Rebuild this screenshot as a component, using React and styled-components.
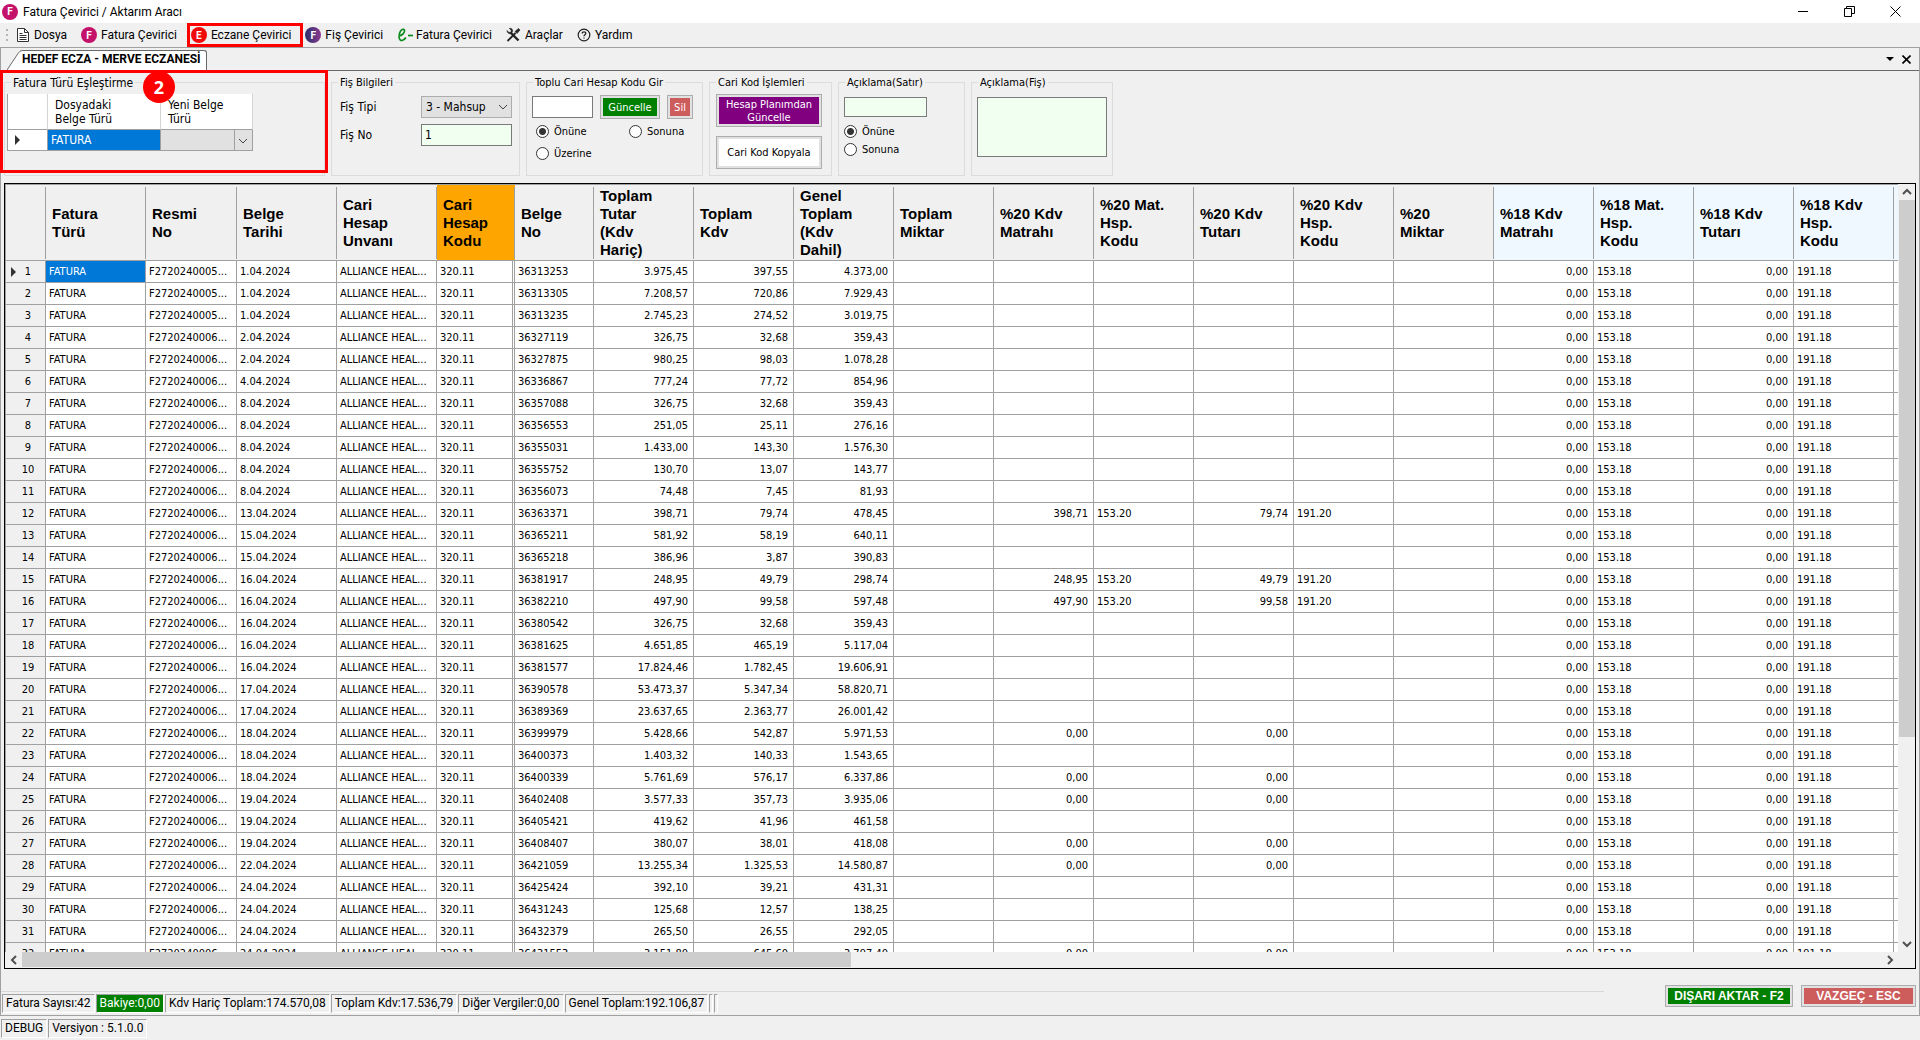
import styled, { createGlobalStyle, css } from "styled-components";

const COLUMNS = [
  { key: "tur", title: "Fatura\nTürü", width: 100 },
  { key: "resmi", title: "Resmi\nNo", width: 91 },
  { key: "tarih", title: "Belge\nTarihi", width: 100 },
  { key: "unvan", title: "Cari\nHesap\nUnvanı", width: 100 },
  { key: "kod", title: "Cari\nHesap\nKodu", width: 78, color: "#ffa500", frozen: true },
  { key: "belge", title: "Belge\nNo", width: 79 },
  { key: "tutar", title: "Toplam\nTutar\n(Kdv\nHariç)", width: 100, num: true },
  { key: "kdv", title: "Toplam\nKdv", width: 100, num: true },
  { key: "genel", title: "Genel\nToplam\n(Kdv\nDahil)", width: 100, num: true },
  { key: "miktar", title: "Toplam\nMiktar", width: 100, num: true },
  { key: "m20", title: "%20 Kdv\nMatrahı", width: 100, num: true },
  { key: "mk20", title: "%20 Mat.\nHsp.\nKodu", width: 100 },
  { key: "t20", title: "%20 Kdv\nTutarı", width: 100, num: true },
  { key: "tk20", title: "%20 Kdv\nHsp.\nKodu", width: 100 },
  { key: "miktar20", title: "%20\nMiktar", width: 100, num: true },
  { key: "m18", title: "%18 Kdv\nMatrahı", width: 100, num: true, color: "#f0f8ff" },
  { key: "mk18", title: "%18 Mat.\nHsp.\nKodu", width: 100, color: "#f0f8ff" },
  { key: "t18", title: "%18 Kdv\nTutarı", width: 100, num: true, color: "#f0f8ff" },
  { key: "tk18", title: "%18 Kdv\nHsp.\nKodu", width: 100, color: "#f0f8ff" },
];

// tarih, belge no, tutar, kdv, genel toplam, %20 matrah, %20 tutar
const INVOICES = [
  ["1.04.2024", "36313253", "3.975,45", "397,55", "4.373,00"],
  ["1.04.2024", "36313305", "7.208,57", "720,86", "7.929,43"],
  ["1.04.2024", "36313235", "2.745,23", "274,52", "3.019,75"],
  ["2.04.2024", "36327119", "326,75", "32,68", "359,43"],
  ["2.04.2024", "36327875", "980,25", "98,03", "1.078,28"],
  ["4.04.2024", "36336867", "777,24", "77,72", "854,96"],
  ["8.04.2024", "36357088", "326,75", "32,68", "359,43"],
  ["8.04.2024", "36356553", "251,05", "25,11", "276,16"],
  ["8.04.2024", "36355031", "1.433,00", "143,30", "1.576,30"],
  ["8.04.2024", "36355752", "130,70", "13,07", "143,77"],
  ["8.04.2024", "36356073", "74,48", "7,45", "81,93"],
  ["13.04.2024", "36363371", "398,71", "79,74", "478,45", "398,71", "79,74"],
  ["15.04.2024", "36365211", "581,92", "58,19", "640,11"],
  ["15.04.2024", "36365218", "386,96", "3,87", "390,83"],
  ["16.04.2024", "36381917", "248,95", "49,79", "298,74", "248,95", "49,79"],
  ["16.04.2024", "36382210", "497,90", "99,58", "597,48", "497,90", "99,58"],
  ["16.04.2024", "36380542", "326,75", "32,68", "359,43"],
  ["16.04.2024", "36381625", "4.651,85", "465,19", "5.117,04"],
  ["16.04.2024", "36381577", "17.824,46", "1.782,45", "19.606,91"],
  ["17.04.2024", "36390578", "53.473,37", "5.347,34", "58.820,71"],
  ["17.04.2024", "36389369", "23.637,65", "2.363,77", "26.001,42"],
  ["18.04.2024", "36399979", "5.428,66", "542,87", "5.971,53", "0,00", "0,00"],
  ["18.04.2024", "36400373", "1.403,32", "140,33", "1.543,65"],
  ["18.04.2024", "36400339", "5.761,69", "576,17", "6.337,86", "0,00", "0,00"],
  ["19.04.2024", "36402408", "3.577,33", "357,73", "3.935,06", "0,00", "0,00"],
  ["19.04.2024", "36405421", "419,62", "41,96", "461,58"],
  ["19.04.2024", "36408407", "380,07", "38,01", "418,08", "0,00", "0,00"],
  ["22.04.2024", "36421059", "13.255,34", "1.325,53", "14.580,87", "0,00", "0,00"],
  ["24.04.2024", "36425424", "392,10", "39,21", "431,31"],
  ["24.04.2024", "36431243", "125,68", "12,57", "138,25"],
  ["24.04.2024", "36432379", "265,50", "26,55", "292,05"],
  ["24.04.2024", "36431553", "3.151,80", "645,60", "3.797,40", "0,00", "0,00"],
];

const ROWS = INVOICES.map(([tarih, belge, tutar, kdv, genel, m20, t20], i) => {
  const hasCodes = m20 && m20 !== "0,00";
  return {
    tur: "FATURA",
    resmi: i < 3 ? "F2720240005..." : "F2720240006...",
    tarih,
    unvan: "ALLIANCE HEAL...",
    kod: "320.11",
    belge,
    tutar,
    kdv,
    genel,
    m20,
    mk20: hasCodes ? "153.20" : "",
    t20,
    tk20: hasCodes ? "191.20" : "",
    m18: "0,00",
    mk18: "153.18",
    t18: "0,00",
    tk18: "191.18",
  };
});

const TOTALS = [
  { label: "Fatura Sayısı:42" },
  { label: "Bakiye:0,00", green: true },
  { label: "Kdv Hariç Toplam:174.570,08" },
  { label: "Toplam Kdv:17.536,79" },
  { label: "Diğer Vergiler:0,00" },
  { label: "Genel Toplam:192.106,87" },
];

const Disc = ({ letter, from, to }) => (
  <Round $from={from} $to={to || from}>
    {letter}
  </Round>
);

const DocIcon = () => (
  <svg width="14" height="16" viewBox="0 0 14 16" fill="none" stroke="#333">
    <path d="M1.5 1.5h7l4 4v9h-11z" fill="#fff" />
    <path d="M8.5 1.5v4h4M3.5 6.5h3M3.5 8.5h7M3.5 10.5h7M3.5 12.5h7" />
  </svg>
);

const EIcon = () => (
  <svg width="17" height="16" viewBox="0 0 17 16" fill="none" stroke="#0a8a1a" strokeWidth="1.7">
    <path d="M1.5 9C5 8.500 8 6 7.500 3.500C7 1 3.500 2.500 2.500 6.500C1.500 11 2.500 13.800 5 13.500C6.800 13.200 8 12 8.800 10.500" />
    <path d="M11 8.500h5" />
  </svg>
);

const ToolsIcon = () => (
  <svg width="15" height="16" viewBox="0 0 15 16" fill="none" stroke="#222">
    <path d="M4.500 5.500L12.500 13.500" strokeWidth="2.400" />
    <path d="M1 3.500L3 5.500L5 5.200L5.200 3.200L3.300 1.400C5.500 .8 7 2.500 6.600 4.600L5 6.600C3 7.200 1 5.800 1 3.500z" fill="#222" strokeWidth=".6" />
    <path d="M1.500 14L9.500 6" strokeWidth="1.800" />
    <path d="M9 4.500L12.500 1.500L14 3L11 6.500z" fill="#222" strokeWidth=".6" />
  </svg>
);

const HelpIcon = () => (
  <svg width="14" height="14" viewBox="0 0 14 14" fill="none" stroke="#222">
    <circle cx="7" cy="7" r="5.800" strokeWidth="1.200" />
    <path d="M5.200 5.600C5.200 3.300 8.900 3.400 8.800 5.500C8.700 6.700 7 6.800 7 8.300M7 9.400v1.200" strokeWidth="1.300" />
  </svg>
);

const Chevron = ({ dir = "down", bold }) => {
  const turn = { down: 0, left: 90, up: 180, right: 270 }[dir];
  return (
    <svg width="10" height="10" viewBox="0 0 10 10" fill="none" stroke={bold ? "#505050" : "#444"} strokeWidth={bold ? 2 : 1}>
      <path d="M1 3L5 7L9 3" transform={`rotate(${turn} 5 5)`} />
    </svg>
  );
};

const RowArrow = () => (
  <svg width="6" height="10" viewBox="0 0 6 10" fill="#333">
    <path d="M0 0L5 5L0 10z" />
  </svg>
);

const MENU = [
  { label: "Dosya", icon: <DocIcon /> },
  { label: "Fatura Çevirici", icon: <Disc letter="F" from="#c4126a" /> },
  { label: "Eczane Çevirici", icon: <Disc letter="E" from="#f00a0a" />, marked: true },
  { label: "Fiş Çevirici", icon: <Disc letter="F" from="#2c2f6b" to="#8a3a8e" /> },
  { label: "Fatura Çevirici", icon: <EIcon />, tight: true },
  { label: "Araçlar", icon: <ToolsIcon /> },
  { label: "Yardım", icon: <HelpIcon /> },
];

const InvoiceGrid = () => (
  <GridFrame>
    <GridBody>
      <GridTable>
        <colgroup>
          <Col $width={40} />
          {COLUMNS.map(({ key, width }) => (
            <Col key={key} $width={width} />
          ))}
          <col />
        </colgroup>
        <thead>
          <tr>
            <HeadCell>
              <HeadText />
            </HeadCell>
            {COLUMNS.map(({ key, title, color }) => (
              <HeadCell key={key} $color={color} scope="col">
                <HeadText>{title}</HeadText>
              </HeadCell>
            ))}
            <HeadCell $color="#f0f8ff" />
          </tr>
        </thead>
        <tbody>
          {ROWS.map((row, i) => (
            <tr key={row.belge}>
              <RowHead scope="row">
                <RowNumber>
                  <ArrowSlot>{i === 0 && <RowArrow />}</ArrowSlot>
                  {i + 1}
                </RowNumber>
              </RowHead>
              {COLUMNS.map(({ key, num, frozen }) => (
                <Cell key={key} $num={num} $frozen={frozen} $selected={i === 0 && key === "tur"}>
                  {row[key]}
                </Cell>
              ))}
              <Cell $last />
            </tr>
          ))}
        </tbody>
      </GridTable>
    </GridBody>
    <VerticalBar>
      <BarButton aria-label="Yukarı">
        <Chevron dir="up" bold />
      </BarButton>
      <VerticalTrack>
        <VerticalThumb />
      </VerticalTrack>
      <BarButton aria-label="Aşağı">
        <Chevron bold />
      </BarButton>
    </VerticalBar>
    <HorizontalBar>
      <BarButton aria-label="Sola">
        <Chevron dir="left" bold />
      </BarButton>
      <HorizontalTrack>
        <HorizontalThumb />
      </HorizontalTrack>
      <BarButton aria-label="Sağa">
        <Chevron dir="right" bold />
      </BarButton>
    </HorizontalBar>
  </GridFrame>
);

const App = () => {
  return (
    <Window>
      <GlobalStyle />
      <TitleBar>
        <Disc letter="F" from="#c4126a" />
        <Title>Fatura Çevirici / Aktarım Aracı</Title>
        <WindowButtons>
          <WindowButton aria-label="Simge durumuna küçült">
            <svg width="11" height="11" stroke="#000">
              <path d="M0 5.500h10" />
            </svg>
          </WindowButton>
          <WindowButton aria-label="Geri yükle">
            <svg width="11" height="11" fill="none" stroke="#000">
              <path d="M.5 2.500h7v8h-7zM2.500 2.500v-2h8v7h-3" />
            </svg>
          </WindowButton>
          <WindowButton aria-label="Kapat">
            <svg width="11" height="11" stroke="#000">
              <path d="M.5 .5l10 10M10.500 .5l-10 10" />
            </svg>
          </WindowButton>
        </WindowButtons>
      </TitleBar>

      <Toolbar>
        <Grip />
        {MENU.map(({ label, icon, marked, tight }, i) => (
          <MenuButton key={i} $marked={marked} $tight={tight}>
            {icon}
            {label}
          </MenuButton>
        ))}
      </Toolbar>

      <Panel>
        <TabStrip>
          <Tab>
            <svg width="15" height="20" viewBox="0 0 15 20">
              <path d="M0 20L11 3.500Q13 .5 15 .5V20z" fill="#fff" />
              <path d="M0 20L11 3.500Q13 .5 15 .5" fill="none" stroke="#696969" />
            </svg>
            <TabText>HEDEF ECZA - MERVE ECZANESİ</TabText>
          </Tab>
          <TabTools>
            <ToolButton aria-label="Sekmeler">
              <svg width="8" height="4">
                <path d="M0 0h8L4 4z" />
              </svg>
            </ToolButton>
            <ToolButton aria-label="Sekmeyi kapat">
              <svg width="9" height="9" stroke="#000" strokeWidth="1.600">
                <path d="M.5 .5l8 8M8.500 .5l-8 8" />
              </svg>
            </ToolButton>
          </TabTools>
        </TabStrip>

        <Groups>
          <Group $width={321}>
            <Legend $big>Fatura Türü Eşleştirme</Legend>
            <MatchTable>
              <thead>
                <tr>
                  <MatchHead $width={40} />
                  <MatchHead $width={113}>{"Dosyadaki\nBelge Türü"}</MatchHead>
                  <MatchHead $width={92}>{"Yeni Belge\nTürü"}</MatchHead>
                </tr>
              </thead>
              <tbody>
                <tr>
                  <MatchCell>
                    <RowArrow />
                  </MatchCell>
                  <MatchCell $selected>FATURA</MatchCell>
                  <MatchCell $flush>
                    <SelectBox $cell>
                      <select aria-label="Yeni Belge Türü" />
                      <Chevron />
                    </SelectBox>
                  </MatchCell>
                </tr>
              </tbody>
            </MatchTable>
          </Group>

          <Group $width={189}>
            <Legend>Fiş Bilgileri</Legend>
            <SlipForm>
              <label htmlFor="fis-tipi">Fiş Tipi</label>
              <SelectBox>
                <select id="fis-tipi">
                  <option>3 - Mahsup</option>
                </select>
                <Chevron />
              </SelectBox>
              <label htmlFor="fis-no">Fiş No</label>
              <TextInput id="fis-no" defaultValue="1" $mint $height={22} />
            </SlipForm>
          </Group>

          <Group $width={177}>
            <Legend>Toplu Cari Hesap Kodu Gir</Legend>
            <GroupBody>
              <CodeRow>
                <TextInput aria-label="Cari hesap kodu" $height={22} />
                <PushButton $color="#008000" $height={24}>Güncelle</PushButton>
                <PushButton $color="#cd5c5c" $height={24}>Sil</PushButton>
              </CodeRow>
              <RadioGrid>
                <Radio>
                  <input type="radio" name="kod" defaultChecked />
                  Önüne
                </Radio>
                <Radio>
                  <input type="radio" name="kod" />
                  Sonuna
                </Radio>
                <Radio>
                  <input type="radio" name="kod" />
                  Üzerine
                </Radio>
              </RadioGrid>
            </GroupBody>
          </Group>

          <Group $width={123}>
            <Legend>Cari Kod İşlemleri</Legend>
            <ButtonStack>
              <PushButton $color="#800080" $height={33}>{"Hesap Planımdan\nGüncelle"}</PushButton>
              <PushButton $color="#fff" $height={33}>Cari Kod Kopyala</PushButton>
            </ButtonStack>
          </Group>

          <Group $width={127}>
            <Legend>Açıklama(Satır)</Legend>
            <GroupBody>
              <LineInput aria-label="Açıklama(Satır)" $mint $height={20} />
              <RadioStack>
                <Radio>
                  <input type="radio" name="satir" defaultChecked />
                  Önüne
                </Radio>
                <Radio>
                  <input type="radio" name="satir" />
                  Sonuna
                </Radio>
              </RadioStack>
            </GroupBody>
          </Group>

          <Group $width={142}>
            <Legend>Açıklama(Fiş)</Legend>
            <GroupBody>
              <NoteArea aria-label="Açıklama(Fiş)" />
            </GroupBody>
          </Group>

          <Highlight />
          <StepBadge>2</StepBadge>
        </Groups>

        <InvoiceGrid />

        <Footer>
          <Totals>
            {TOTALS.map(({ label, green }) => (
              <StatusItem key={label} $green={green}>
                {label}
              </StatusItem>
            ))}
            <StatusItem $empty />
            <StatusItem $empty />
          </Totals>
          <Actions>
            <ActionButton $color="#008000" $height={22} $width={128}>DIŞARI AKTAR - F2</ActionButton>
            <ActionButton $color="#cd5c5c" $height={22} $width={115}>VAZGEÇ - ESC</ActionButton>
          </Actions>
        </Footer>
      </Panel>

      <StatusBar>
        <StatusItem>DEBUG</StatusItem>
        <StatusItem>Versiyon : 5.1.0.0</StatusItem>
      </StatusBar>
    </Window>
  );
};

export default App;

const segoe = `Roboto, "Noto Sans", sans-serif`;
const tahoma = `"DejaVu Sans Condensed", "Noto Sans", sans-serif`;
const line = "#a0a0a0";

const GlobalStyle = createGlobalStyle`
  * {
    box-sizing: border-box;
  }
  body {
    margin: 0;
    background: #f0f0f0;
    color: #000;
    font-family: ${tahoma};
    font-size: 11px;
  }
  button, input, select, textarea {
    font: inherit;
    color: inherit;
    margin: 0;
    padding: 0;
    border: 0;
    border-radius: 0;
    background: none;
  }
  svg {
    display: block;
    flex: none;
  }
`;

const Window = styled.div`
  display: flex;
  flex-direction: column;
  height: 100vh;
`;

const TitleBar = styled.header`
  display: flex;
  align-items: center;
  height: 23px;
  padding-left: 2px;
  gap: 5px;
  background: #fff;
`;

const Title = styled.h1`
  flex: 1;
  margin: 0;
  font: 400 12px ${segoe};
`;

const WindowButtons = styled.div`
  display: flex;
  gap: 35px;
  padding-right: 19px;
`;

const WindowButton = styled.button`
  display: flex;
`;

const Round = styled.span`
  display: flex;
  align-items: center;
  justify-content: center;
  flex: none;
  width: 16px;
  height: 16px;
  border-radius: 50%;
  background: linear-gradient(90deg, ${({ $from }) => $from}, ${({ $to }) => $to});
  color: #fff;
  font: 700 10px Roboto, sans-serif;
`;

const Toolbar = styled.nav`
  display: flex;
  align-items: center;
  gap: 14px;
  height: 24px;
`;

const Grip = styled.span`
  width: 2px;
  height: 12px;
  margin: 0 -6px 0 6px;
  background: repeating-linear-gradient(#b4b4b4 0 2px, transparent 2px 5px);
`;

const MenuButton = styled.button`
  position: relative;
  display: flex;
  align-items: center;
  gap: ${({ $tight }) => ($tight ? 2 : 4)}px;
  height: 24px;
  font: 400 12px ${segoe};
  white-space: nowrap;

  ${({ $marked }) =>
    $marked &&
    css`
      &::after {
        content: "";
        position: absolute;
        inset: 0 -12px 0 -4px;
        border: 3px solid #f00;
      }
    `}
`;

const Panel = styled.main`
  flex: 1;
  min-height: 0;
  display: flex;
  flex-direction: column;
  border: 1px solid ${line};
`;

const TabStrip = styled.div`
  display: flex;
  align-items: flex-end;
  justify-content: space-between;
  height: 23px;
  padding-left: 6px;
  border-bottom: 1px solid #696969;
`;

const Tab = styled.button`
  display: flex;
  height: 20px;
`;

const TabText = styled.span`
  height: 20px;
  padding-right: 5px;
  border: 1px solid #696969;
  border-width: 1px 1px 0 0;
  border-top-right-radius: 3px;
  background: #fff;
  font: 700 12px/16px ${segoe};
`;

const TabTools = styled.div`
  display: flex;
  align-items: center;
  align-self: center;
  gap: 8px;
  padding-right: 8px;
`;

const ToolButton = styled.button`
  display: flex;
`;

const Groups = styled.div`
  position: relative;
  display: flex;
  gap: 6px;
  padding: 3px 3px 7px;
`;

const Group = styled.fieldset`
  width: ${({ $width }) => $width}px;
  height: 102px;
  min-width: 0;
  margin: 0;
  padding: 0;
  border: 1px solid #dcdcdc;
`;

const Legend = styled.legend`
  height: 16px;
  margin-left: 6px;
  padding: 0 2px;
  font-size: ${({ $big }) => ($big ? 12 : 11)}px;
  line-height: 18px;
  white-space: nowrap;
`;

const GroupBody = styled.div`
  padding: 5px 5px 0;
`;

const MatchTable = styled.table`
  margin: 4px 0 0 2px;
  border-spacing: 0;
  border-left: 1px solid ${line};
  table-layout: fixed;
  width: 246px;
  font-size: 12px;
`;

const MatchHead = styled.th`
  width: ${({ $width }) => $width}px;
  height: 36px;
  padding: 0 0 0 7px;
  border-right: 1px solid #d4d4d4;
  border-bottom: 1px solid ${line};
  background: #fff;
  font-weight: 400;
  line-height: 14px;
  text-align: left;
  white-space: pre-line;
`;

const MatchCell = styled.td`
  height: 21px;
  padding: ${({ $flush }) => ($flush ? "0" : "0 0 0 3px")};
  border-right: 1px solid ${line};
  border-bottom: 1px solid ${line};
  background: ${({ $selected }) => ($selected ? "#0078d7" : "#fff")};
  color: ${({ $selected }) => ($selected ? "#fff" : "inherit")};

  > svg {
    margin-left: 4px;
  }
`;

const SelectBox = styled.div`
  position: relative;

  select {
    display: block;
    appearance: none;
    width: 100%;
    height: ${({ $cell }) => ($cell ? 20 : 22)}px;
    padding-left: 4px;
    border: ${({ $cell }) => ($cell ? "0" : "1px solid #adadad")};
    background: #e1e1e1;
    font-size: 12px;
  }
  svg {
    position: absolute;
    top: 6px;
    right: 4px;
    pointer-events: none;
  }
  ${({ $cell }) =>
    $cell &&
    css`
      &::after {
        content: "";
        position: absolute;
        inset: 0 17px 0 auto;
        border-left: 1px solid ${line};
      }
    `}
`;

const SlipForm = styled.div`
  display: grid;
  grid-template-columns: 81px 91px;
  align-items: center;
  row-gap: 6px;
  padding: 6px 0 0 8px;
  font-size: 12px;
`;

const TextInput = styled.input`
  width: 100%;
  min-width: 0;
  height: ${({ $height }) => $height}px;
  padding: 0 3px;
  border: 1px solid #7a7a7a;
  background: ${({ $mint }) => ($mint ? "#f0fff0" : "#fff")};
`;

const LineInput = styled(TextInput)`
  display: block;
  width: 83px;
  margin-top: 2px;
`;

const CodeRow = styled.div`
  display: grid;
  grid-template-columns: 61px 60px 26px;
  align-items: center;
  gap: 7px;
`;

const PushButton = styled.button`
  height: ${({ $height }) => $height}px;
  border: 1px solid #adadad;
  background: ${({ $color }) => $color};
  box-shadow: inset 0 0 0 2px #e1e1e1;
  color: ${({ $color }) => ($color === "#fff" ? "#000" : "#fff")};
  line-height: 13px;
  white-space: pre;
`;

const ActionButton = styled(PushButton)`
  width: ${({ $width }) => $width}px;
  font-size: 12px;
  font-weight: 700;
  font-family: "Liberation Sans", Arial, sans-serif;
`;

const ButtonStack = styled.div`
  display: grid;
  gap: 9px;
  padding: 4px 9px 0 6px;
`;

const RadioGrid = styled.div`
  display: grid;
  grid-template-columns: 93px auto;
  row-gap: 6px;
  padding: 4px 0 0 4px;
`;

const RadioStack = styled.div`
  display: grid;
  row-gap: 2px;
  padding-top: 6px;
`;

const Radio = styled.label`
  display: flex;
  align-items: center;
  gap: 5px;
  height: 16px;

  input {
    appearance: none;
    width: 13px;
    height: 13px;
    border: 1px solid #333;
    border-radius: 50%;
    background: #fff;
  }
  input:checked {
    background: radial-gradient(#333 0 3px, #fff 4px);
  }
`;

const NoteArea = styled.textarea`
  display: block;
  width: 100%;
  height: 60px;
  margin-top: 2px;
  border: 1px solid #7a7a7a;
  background: #f0fff0;
  resize: none;
`;

const Highlight = styled.div`
  position: absolute;
  top: -1px;
  left: -1px;
  width: 328px;
  height: 103px;
  border: 3px solid #f00;
  pointer-events: none;
`;

const StepBadge = styled.span`
  position: absolute;
  top: 0;
  left: 142px;
  display: flex;
  align-items: center;
  justify-content: center;
  width: 32px;
  height: 32px;
  border-radius: 50%;
  background: #f00;
  color: #fff;
  font: 700 18px "Open Sans", sans-serif;
`;

const GridFrame = styled.section`
  flex: 1;
  min-height: 0;
  display: grid;
  grid-template: minmax(0, 1fr) 16px / minmax(0, 1fr) 17px;
  margin: 0 3px;
  border: 1px solid #000;
`;

const GridBody = styled.div`
  overflow: hidden;
  border: 1px solid ${line};
  border-width: 1px 0 0 1px;
  background: #fff;
`;

const GridTable = styled.table`
  width: 100%;
  table-layout: fixed;
  border-spacing: 0;
`;

const Col = styled.col`
  width: ${({ $width }) => $width}px;
`;

const HeadCell = styled.th`
  height: 76px;
  padding: 0;
  border-bottom: 1px solid ${line};
  background: ${({ $color }) => $color || "#f0f0f0"};
`;

const HeadText = styled.div`
  display: flex;
  align-items: center;
  height: 72px;
  padding-left: 6px;
  border-right: 1px solid ${line};
  font: 700 15px/18px "Liberation Sans", Arial, sans-serif;
  text-align: left;
  white-space: pre-line;
`;

const RowHead = styled.th`
  padding: 0;
  border-right: 1px solid ${line};
  border-bottom: 1px solid ${line};
  background: #f0f0f0;
  font-weight: 400;
`;

const RowNumber = styled.div`
  position: relative;
  padding-left: 5px;
`;

const ArrowSlot = styled.span`
  position: absolute;
  top: 2px;
  left: 5px;
`;

const Cell = styled.td`
  height: 22px;
  padding: 0 5px 0 3px;
  border-bottom: 1px solid ${line};
  border-right: ${({ $frozen, $last }) => ($last ? "0" : $frozen ? `3px double ${line}` : `1px solid ${line}`)};
  background: ${({ $selected }) => ($selected ? "#0078d7" : "#fff")};
  color: ${({ $selected }) => ($selected ? "#fff" : "inherit")};
  line-height: 14px;
  text-align: ${({ $num }) => ($num ? "right" : "left")};
  white-space: nowrap;
`;

const VerticalBar = styled.div`
  display: flex;
  flex-direction: column;
  background: #f0f0f0;
`;

const HorizontalBar = styled.div`
  display: flex;
  grid-column: 1;
  background: #f0f0f0;
`;

const BarButton = styled.button`
  display: flex;
  align-items: center;
  justify-content: center;
  width: 17px;
  height: 16px;
`;

const VerticalTrack = styled.div`
  flex: 1;
`;

const VerticalThumb = styled.div`
  height: 73%;
  margin-left: 1px;
  background: #cdcdcd;
`;

const HorizontalTrack = styled.div`
  flex: 1;
`;

const HorizontalThumb = styled.div`
  width: 44.6%;
  height: 15px;
  background: #cdcdcd;
`;

const Footer = styled.footer`
  display: flex;
  gap: 61px;
  height: 46px;
  padding-right: 3px;
`;

const Totals = styled.div`
  flex: 1;
  display: flex;
  gap: 1px;
  margin-top: 22px;
  padding: 2px 0 0 1px;
  border-top: 1px solid #d7d7d7;
`;

const StatusItem = styled.span`
  height: 19px;
  padding: ${({ $empty }) => ($empty ? "0 1px" : "0 3px")};
  border: 1px solid;
  border-color: ${line} #fff #fff ${line};
  background: ${({ $green }) => ($green ? "#008000" : "transparent")};
  color: ${({ $green }) => ($green ? "#fff" : "inherit")};
  font: 400 12px/17px ${segoe};
  white-space: nowrap;
`;

const Actions = styled.div`
  display: flex;
  gap: 8px;
  margin-top: 16px;
`;

const StatusBar = styled.div`
  display: flex;
  gap: 1px;
  height: 24px;
  padding: 3px 0 0 1px;
`;
